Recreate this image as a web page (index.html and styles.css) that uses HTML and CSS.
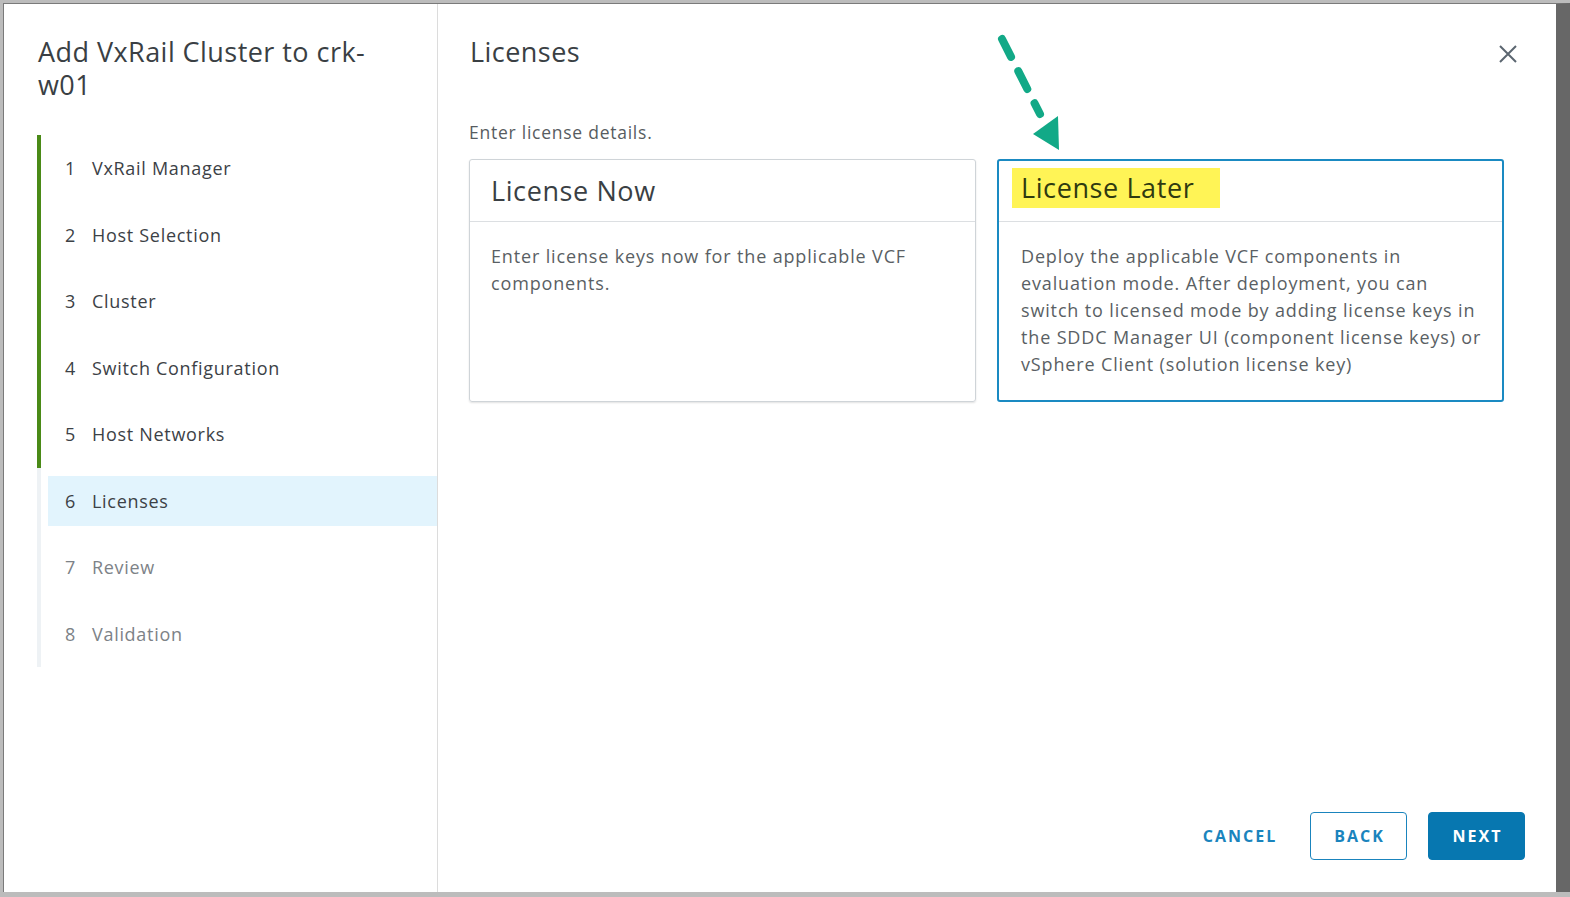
FILE: index.html
```html
<!DOCTYPE html>
<html>
<head>
<meta charset="utf-8">
<link rel="stylesheet" href="styles.css">
</head>
<body>
<div class="modal">
  <aside class="side">
    <h1 class="side-title">Add VxRail Cluster to crk-w01</h1>
    <ol class="steps">
      <li class="step done"><div class="step-in"><span class="num">1</span><span>VxRail Manager</span></div></li>
      <li class="step done"><div class="step-in"><span class="num">2</span><span>Host Selection</span></div></li>
      <li class="step done"><div class="step-in"><span class="num">3</span><span>Cluster</span></div></li>
      <li class="step done"><div class="step-in"><span class="num">4</span><span>Switch Configuration</span></div></li>
      <li class="step done"><div class="step-in"><span class="num">5</span><span>Host Networks</span></div></li>
      <li class="step current"><div class="step-in"><span class="num">6</span><span>Licenses</span></div></li>
      <li class="step todo"><div class="step-in"><span class="num">7</span><span>Review</span></div></li>
      <li class="step todo"><div class="step-in"><span class="num">8</span><span>Validation</span></div></li>
    </ol>
  </aside>
  <main class="content">
    <div class="head">
      <h2 class="page-title">Licenses</h2>
      <button class="close" aria-label="Close">
        <svg width="20" height="20" viewBox="0 0 20 20"><path d="M2 2 L18 18 M18 2 L2 18" stroke="#5b6670" stroke-width="2" fill="none"/></svg>
      </button>
    </div>
    <p class="intro">Enter license details.</p>
    <div class="cards">
      <div class="card">
        <div class="card-head"><span class="card-title">License Now</span></div>
        <div class="card-body">Enter license keys now for the applicable VCF components.</div>
      </div>
      <div class="card selected">
        <div class="card-head"><span class="card-title hl">License Later</span></div>
        <div class="card-body">Deploy the applicable VCF components in evaluation mode. After deployment, you can switch to licensed mode by adding license keys in the SDDC Manager UI (component license keys) or vSphere Client (solution license key)</div>
      </div>
    </div>
    <div class="footer">
      <button class="btn btn-link">CANCEL</button>
      <button class="btn btn-outline">BACK</button>
      <button class="btn btn-primary">NEXT</button>
    </div>
    <svg class="arrow" width="90" height="130" viewBox="0 0 90 130">
      <line x1="11" y1="9" x2="49" y2="84" stroke="#12a987" stroke-width="8" stroke-linecap="round" stroke-dasharray="20 16"/>
      <polygon points="68,120 42,104 67,86" fill="#12a987"/>
    </svg>
  </main>
</div>
</body>
</html>
```

FILE: styles.css
```css
html, body {
  margin: 0;
  padding: 0;
}
body {
  width: 1570px;
  height: 897px;
  background: #bcbcbc;
  font-family: "Open Sans", "Liberation Sans", sans-serif;
  overflow: hidden;
}
.modal {
  box-sizing: border-box;
  margin: 3px 0 0 3px;
  width: 1567px;
  height: 889px;
  display: flex;
  background: #fff;
  border-top: 1px solid #7a7a7a;
  border-left: 1px solid #7a7a7a;
  border-right: 14px solid #676767;
  position: relative;
}
.side {
  width: 434px;
  flex: none;
  border-right: 1px solid #dcdcdc;
  padding: 31px 0 0 34px;
  box-sizing: border-box;
}
.side-title {
  margin: 0;
  max-width: 345px;
  font-size: 27px;
  line-height: 33px;
  font-weight: 400;
  color: #3a3f44;
  letter-spacing: 0.45px;
}
.steps {
  list-style: none;
  margin: 34px 0 0 -1px;
  padding: 0;
  border-left: 4px solid #eef2f5;
}
.step {
  height: 66.5px;
  display: flex;
  align-items: center;
  margin-left: -4px;
  border-left: 4px solid transparent;
}
.step.done {
  border-left-color: #4a8a17;
}
.step-in {
  display: flex;
  align-items: center;
  height: 50px;
  flex: 1;
  margin-left: 7px;
  padding-left: 17px;
  font-size: 18px;
  letter-spacing: 0.7px;
  color: #3c4146;
}
.step.current .step-in {
  background: #e2f4fd;
}
.step.todo .step-in {
  color: #7d8287;
}
.num {
  width: 27px;
  flex: none;
  letter-spacing: 0;
}
.content {
  flex: 1;
  position: relative;
  padding: 0 52px 0 31px;
  display: flex;
  flex-direction: column;
}
.head {
  display: flex;
  justify-content: space-between;
  height: 98px;
  padding-top: 2px;
  box-sizing: border-box;
  align-items: flex-start;
}
.page-title {
  margin: 29px 0 0 1px;
  font-size: 27px;
  line-height: 34px;
  font-weight: 400;
  letter-spacing: 0.45px;
  color: #3a3f44;
}
.close {
  background: none;
  border: none;
  padding: 0;
  margin: 38px -14px 0 0;
  width: 20px;
  height: 20px;
  cursor: pointer;
}
.close svg { display: block; }
.intro {
  margin: 20px 0 17px 0;
  font-size: 17.5px;
  letter-spacing: 0.75px;
  line-height: 20px;
  color: #575c61;
}
.cards {
  display: grid;
  grid-template-columns: 1fr 1fr;
  gap: 21px;
}
.card {
  border: 1px solid #cfd4d8;
  border-radius: 3px;
  box-shadow: 0 1px 2px rgba(0,0,0,0.12);
  height: 243px;
  box-sizing: border-box;
}
.card.selected {
  border: 2px solid #1a8ac2;
  box-shadow: none;
}
.card-head {
  height: 62px;
  border-bottom: 1px solid #dcdfe2;
  display: flex;
  align-items: center;
  padding-left: 21px;
  box-sizing: border-box;
}
.card.selected .card-head {
  padding-left: 13px;
  height: 61px;
}
.card-title {
  font-size: 27px;
  letter-spacing: 0.6px;
  color: #3a3f44;
  line-height: 40px;
}
.card-title.hl {
  background: #fff456;
  padding: 0 26px 0 9px;
  margin-top: -7px;
  color: #2f3a10;
}
.card-body {
  padding: 21px 20px 0 21px;
  font-size: 18px;
  letter-spacing: 0.85px;
  line-height: 27px;
  color: #5a5f64;
}
.card.selected .card-body {
  padding: 21px 18px 0 22px;
}
.footer {
  margin-top: auto;
  margin-bottom: 32px;
  margin-right: -21px;
  display: flex;
  justify-content: flex-end;
  align-items: center;
  gap: 21px;
}
.btn {
  font-family: "Open Sans", "Liberation Sans", sans-serif;
  font-size: 16px;
  font-weight: 700;
  letter-spacing: 2px;
  height: 48px;
  width: 97px;
  border-radius: 4px;
  box-sizing: border-box;
  cursor: pointer;
  padding: 0 0 0 2px;
}
.btn-link {
  background: none;
  border: none;
  color: #1a84bd;
  width: 100px;
}
.btn-outline {
  background: #fff;
  border: 1px solid #1a84bd;
  color: #1a84bd;
}
.btn-primary {
  background: #0777b0;
  border: 1px solid #0777b0;
  color: #fff;
}
.arrow {
  position: absolute;
  left: 553px;
  top: 26px;
}
```
